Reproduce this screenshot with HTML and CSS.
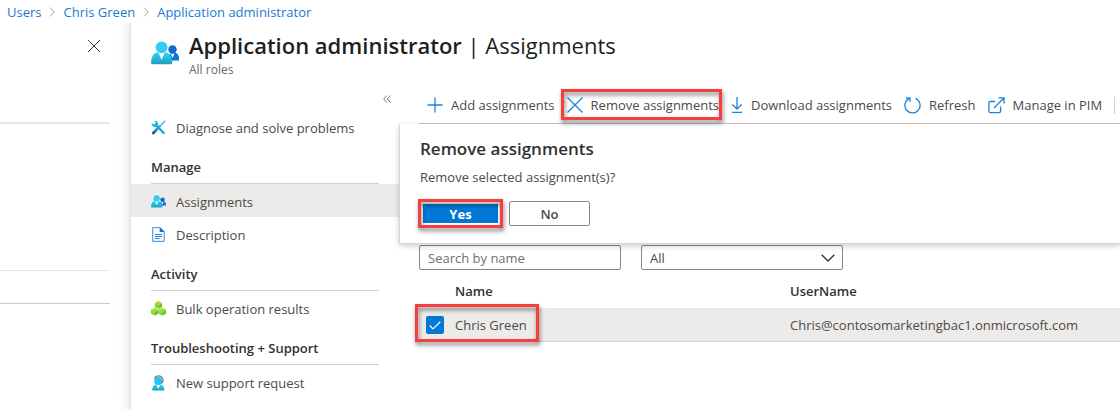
FILE: index.html
```html
<!DOCTYPE html>
<html lang="en">
<head>
<meta charset="utf-8">
<title>Application administrator | Assignments</title>
<link rel="stylesheet" href="styles.css">
</head>
<body>
<svg class="defs" aria-hidden="true">
  <defs>
    <linearGradient id="cyan" x1="0" y1="0" x2="0" y2="1"><stop offset="0" stop-color="#32d4f5"/><stop offset="1" stop-color="#1c9fbd"/></linearGradient>
    <linearGradient id="tool" x1="1" y1="0" x2="0" y2="1"><stop offset="0" stop-color="#32c8ea"/><stop offset="1" stop-color="#0b5a94"/></linearGradient>
    <symbol id="people" viewBox="0 0 28 24">
      <path fill="#0078d4" d="M18 19.500h10v-2c0-3.500-2-6-5-6s-5 2-5 5z"/>
      <circle cx="21.500" cy="8.500" r="4.200" fill="#0f6cd0"/>
      <path fill="#fff" d="M19.800 12.800h3.600L21.600 17z"/>
      <path fill="url(#cyan)" d="M0 21.500C.5 15 3 11.500 6.500 11.500h8c4 0 6.500 4 6.800 10 0 1-.6 1.700-1.600 1.700H1.600C.6 23.200 0 22.600 0 21.500z"/>
      <path fill="#fff" d="M7.500 11.500h6.200L10.600 19z"/>
      <circle cx="10.600" cy="6.300" r="5.900" fill="#32cdf0"/>
    </symbol>
    <symbol id="cube" viewBox="0 0 8 8">
      <path fill="#a4e12a" d="M4 0l3.800 2L4 4 .2 2z"/>
      <path fill="#86d633" d="M.2 2L4 4v4L.2 6z"/>
      <path fill="#6fbf24" d="M7.800 2L4 4v4l3.800-2z"/>
    </symbol>
  </defs>
</svg>

<nav class="crumbs" aria-label="Breadcrumb">
  <a href="#users">Users</a>
  <svg width="6" height="10" viewBox="0 0 6 10"><path d="M1 .5L5.200 5 1 9.500"/></svg>
  <a href="#chris">Chris Green</a>
  <svg width="6" height="10" viewBox="0 0 6 10"><path d="M1 .5L5.200 5 1 9.500"/></svg>
  <a href="#role">Application administrator</a>
</nav>

<div class="blades">
  <aside class="prev">
    <div class="prev-head">
      <button class="close" type="button" aria-label="Close"><svg width="14" height="14" viewBox="0 0 14 14"><path d="M1 1l12 12M13 1L1 13"/></svg></button>
    </div>
    <div class="prev-body"></div>
    <div class="prev-row"></div>
  </aside>

  <div class="blade">
    <header class="head">
      <svg width="28" height="24"><use href="#people"/></svg>
      <div>
        <h1>Application administrator <span>| Assignments</span></h1>
        <p>All roles</p>
      </div>
    </header>

    <div class="columns">
      <nav class="menu" aria-label="Role">
        <button class="collapse" type="button" aria-label="Collapse menu"><svg width="8" height="8" viewBox="0 0 8 8"><path d="M4 .5L.7 4 4 7.500M7.500 .5L4.200 4l3.300 3.500"/></svg></button>
        <a class="item" href="#diagnose">
          <svg width="15" height="15" viewBox="0 0 15 15"><path d="M13.800 1.200L9 6" stroke="#3fb6dd" stroke-width="1.400" stroke-linecap="round"/><path d="M8.800 6.200l-6.600 6.900" stroke="url(#tool)" stroke-width="2.800" stroke-linecap="round"/><path d="M4.500 4.500l8.200 8.500" stroke="#18a5cf" stroke-width="2.200" stroke-linecap="round"/><path d="M3.200 .8A3.200 3.200 0 1 1 .8 3.200l1.900 1.100 1.700-.4.300-1.500z" fill="#24b6dc"/></svg>
          Diagnose and solve problems</a>
        <h2>Manage</h2>
        <a class="item current" href="#assignments" aria-current="page"><svg width="15" height="13"><use href="#people"/></svg>Assignments</a>
        <a class="item" href="#description">
          <svg width="15" height="15" viewBox="0 0 15 15"><path d="M1.700.6h7.500l4 4v9.800H1.700z" fill="#f4faff" stroke="#3f8fe0"/><path d="M8.700.2l4.900 4.900H8.700z" fill="#0f6fd3"/><path d="M4 7.500h7M4 9.500h7M4 11.500h4.500" stroke="#2b86e0"/></svg>
          Description</a>
        <h2>Activity</h2>
        <a class="item" href="#bulk">
          <svg width="15" height="15" viewBox="0 0 15 15"><use href="#cube" x="3.500" y="0" width="8" height="8"/><use href="#cube" x="-.2" y="6.800" width="8" height="8"/><use href="#cube" x="7.200" y="6.800" width="8" height="8"/></svg>
          Bulk operation results</a>
        <h2>Troubleshooting + Support</h2>
        <a class="item" href="#support">
          <svg width="15" height="16" viewBox="0 0 15 16"><path d="M1.200 15.500c0-3.500 1.600-6 4-6h4.200c2.400 0 4 2.500 4 6z" fill="url(#cyan)"/><path d="M5 9.500h4.600L7.300 14z" fill="#e8fbff"/><circle cx="7.200" cy="6" r="4" fill="#22c3ea"/><path d="M3.300 3.200C5 .2 9.500.1 11.200 2.700c1.200 2 .9 4.300-.8 5.800" fill="none" stroke="#767676" stroke-width="1.200"/></svg>
          New support request</a>
      </nav>

      <main class="content">
        <div class="toolbar">
          <button type="button"><svg width="16" height="16" viewBox="0 0 16 16"><path d="M8 .5v15M.5 8h15"/></svg>Add assignments</button>
          <button class="marked" type="button"><svg width="16" height="16" viewBox="0 0 16 16"><path d="M.5.500l15 15M15.500.500l-15 15"/></svg>Remove assignments</button>
          <button type="button"><svg width="12" height="16" viewBox="0 0 12 16"><path d="M6 0v12M1.300 7.500L6 12.200l4.700-4.700M1 15.400h10"/></svg>Download assignments</button>
          <button type="button"><svg width="17" height="17" viewBox="0 0 17 17"><path d="M11.500 1.400A7.600 7.600 0 1 1 5 1.600M2 .8h4v4"/></svg>Refresh</button>
          <button type="button"><svg width="17" height="17" viewBox="0 0 17 17"><path d="M7 4.500H2.500a1.600 1.600 0 0 0-1.600 1.600v8a1.600 1.600 0 0 0 1.600 1.600H11a1.600 1.600 0 0 0 1.600-1.600V9.500M6 11L16 1M10.500.9h5.600v5.600"/></svg>Manage in PIM</button>
          <span class="divider"></span>
        </div>

        <section class="dialog" role="dialog" aria-labelledby="dialog-title">
          <h2 id="dialog-title">Remove assignments</h2>
          <p>Remove selected assignment(s)?</p>
          <div class="actions">
            <button class="yes marked" type="button">Yes</button>
            <button class="no" type="button">No</button>
          </div>
        </section>

        <div class="filters">
          <input type="text" placeholder="Search by name" aria-label="Search by name">
          <div class="select">
            <select aria-label="Type"><option>All</option></select>
            <svg width="14" height="8" viewBox="0 0 14 8"><path d="M.7.700L7 7l6.300-6.300"/></svg>
          </div>
        </div>

        <table>
          <colgroup><col class="c-check"><col class="c-name"><col></colgroup>
          <thead><tr><td></td><th scope="col">Name</th><th scope="col">UserName</th></tr></thead>
          <tbody>
            <tr>
              <td class="pick"><span class="tick"><input type="checkbox" id="chris" checked><svg width="12" height="9" viewBox="0 0 12 9"><path d="M.7 4.500L4 7.900 11.300.700"/></svg></span><span class="ring"></span></td>
              <td><label for="chris">Chris Green</label></td>
              <td>Chris@contosomarketingbac1.onmicrosoft.com</td>
            </tr>
          </tbody>
        </table>
      </main>
    </div>
  </div>
</div>
</body>
</html>
```
FILE: styles.css
```css
* { box-sizing: border-box; }
body {
  margin: 0;
  min-height: 100vh;
  display: flex;
  flex-direction: column;
  overflow: hidden;
  background: #fff;
  color: #4c4a48;
  font: 13px/20px "Open Sans", "Noto Sans", sans-serif;
}
h1, h2, p { margin: 0; }
button, input, select { font: inherit; color: inherit; }
svg { flex: none; }
.defs { position: absolute; width: 0; height: 0; }

.crumbs {
  display: flex;
  align-items: center;
  gap: 8px;
  height: 23px;
  padding: 1px 7px 0;
}
.crumbs a { color: #1a7ad4; text-decoration: none; }
.crumbs svg { fill: none; stroke: #a3a3a3; }

.blades { flex: 1; display: flex; }
.prev { width: 130px; flex: none; padding-right: 20px; }
.prev-head {
  height: 101px;
  padding-top: 14px;
  border-bottom: 2px solid #e6e6e6;
  text-align: right;
}
.close { padding: 2px 9px; border: 0; background: none; line-height: 14px; }
.close svg { display: block; fill: none; stroke: #444; }
.prev-body { height: 147px; border-bottom: 1px solid #e8e8e8; }
.prev-row { height: 33px; border-bottom: 1px solid #ccc; }

.blade {
  flex: 1;
  min-width: 0;
  background: #fff;
  border-left: 1px solid #e2e2e2;
  box-shadow: -2px 0 10px rgba(0, 0, 0, .12);
  clip-path: inset(0 0 0 -16px);
}
.head { display: flex; gap: 10px; height: 64px; padding: 6px 20px 0; }
.head svg { margin-top: 12px; }
.head h1 { color: #201f1e; font-size: 22px; line-height: 32px; font-weight: 600; white-space: nowrap; }
.head h1 span { font-weight: 400; }
.head p { color: #6a6866; font-size: 12px; line-height: 18px; }

.columns { display: flex; }
.menu { width: 268px; flex: none; }
.collapse { display: block; margin-left: auto; height: 23px; padding: 0 8px; border: 0; background: none; }
.collapse svg { display: block; fill: none; stroke: #777; }
.item {
  display: flex;
  align-items: center;
  gap: 10px;
  height: 33px;
  padding: 2px 20px 0;
  color: inherit;
  text-decoration: none;
}
.current { background: #edebe9; }
.menu h2 {
  height: 33px;
  margin: 8px 20px 0;
  padding-top: 6px;
  border-bottom: 1px solid #d2d0ce;
  color: #323130;
  font-size: 13px;
  line-height: 20px;
  font-weight: 600;
}

.content { flex: 1; min-width: 0; padding-left: 20px; }
.toolbar {
  display: flex;
  align-items: center;
  gap: 12px;
  height: 37px;
  padding-left: 8px;
  border-bottom: 1px solid #c8c6c4;
}
.toolbar button {
  position: relative;
  display: flex;
  align-items: center;
  gap: 8px;
  padding: 0;
  border: 0;
  background: none;
  white-space: nowrap;
}
.toolbar svg { fill: none; stroke: #1c82dc; stroke-width: 1.300; }
.divider { width: 1px; height: 17px; background: #d0d0d0; }

.marked::after, .ring {
  content: "";
  position: absolute;
  border: 3px solid #f53e3e;
  filter: drop-shadow(1px 3px 2px rgba(0, 0, 0, .5));
  pointer-events: none;
}
.toolbar .marked::after { inset: -6px -3px -5px -6px; z-index: 3; }

.dialog {
  position: relative;
  z-index: 2;
  margin-left: -20px;
  padding: 12px 20px 17px;
  background: #fff;
  border: 1px solid #d6d6d6;
  border-width: 0 0 1px 1px;
  box-shadow: 0 2px 6px rgba(0, 0, 0, .2);
}
.dialog h2 { color: #323130; font-size: 17px; line-height: 26px; font-weight: 600; }
.dialog p { margin: 5px 0 14px; }
.actions { display: flex; gap: 8px; }
.actions button { width: 81px; height: 25px; padding: 0; font-weight: 600; line-height: 20px; }
.actions .yes {
  position: relative;
  border: 1px solid #0078d4;
  background: #0078d4;
  color: #fff;
  font-weight: 700;
  box-shadow: inset 0 0 0 2px #fff;
}
.yes::after { inset: -3px; }
.no { border: 1px solid #8a8886; border-radius: 2px; background: #fff; }

.filters { display: flex; gap: 20px; margin-top: 1px; }
.filters input, .select { width: 202px; height: 25px; }
.filters input, select {
  padding: 0 8px;
  border: 1px solid #8a8886;
  border-radius: 2px;
  background: #fff;
}
.filters input::placeholder { color: #716f6d; }
.select { position: relative; }
select { width: 100%; height: 100%; appearance: none; }
.select svg { position: absolute; right: 8px; top: 9px; fill: none; stroke: #333; stroke-width: 1.300; pointer-events: none; }

table { width: 100%; table-layout: fixed; border-collapse: collapse; }
.c-check { width: 36px; }
.c-name { width: 335px; }
th, td { padding: 0; text-align: left; }
th { height: 38px; padding-top: 4px; color: #323130; font-weight: 600; }
tbody td { position: relative; height: 33px; padding-top: 2px; background: #edebe9; border-bottom: 1px solid #d2d0ce; }
.tick { position: relative; display: block; width: 18px; height: 18px; margin-left: 7px; }
.tick input { display: block; width: 18px; height: 18px; margin: 0; appearance: none; border-radius: 2px; background: #0078d4; }
.tick svg { position: absolute; left: 3px; top: 5px; fill: none; stroke: #fff; stroke-width: 1.200; pointer-events: none; }
.pick { z-index: 1; }
.ring { left: -4px; top: -4px; width: 124px; height: 38px; }
```
